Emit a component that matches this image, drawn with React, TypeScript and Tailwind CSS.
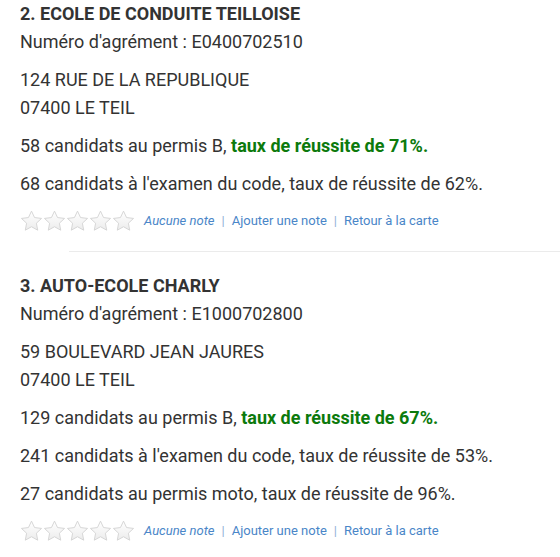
const schools = [
  {
    title: '2. ECOLE DE CONDUITE TEILLOISE',
    agrement: 'E0400702510',
    address: ['124 RUE DE LA REPUBLIQUE', '07400 LE TEIL'],
    permisB: { candidats: 58, taux: 71 },
    stats: ["68 candidats à l'examen du code, taux de réussite de 62%."],
  },
  {
    title: '3. AUTO-ECOLE CHARLY',
    agrement: 'E1000702800',
    address: ['59 BOULEVARD JEAN JAURES', '07400 LE TEIL'],
    permisB: { candidats: 129, taux: 67 },
    stats: [
      "241 candidats à l'examen du code, taux de réussite de 53%.",
      '27 candidats au permis moto, taux de réussite de 96%.',
    ],
  },
];

function Star() {
  return (
    <svg width="23" height="22" viewBox="0 0 24 23">
      <defs>
        <linearGradient id="starFill" x1="0" y1="0" x2="0" y2="1">
          <stop offset="0" stopColor="#ffffff" />
          <stop offset="1" stopColor="#ececec" />
        </linearGradient>
      </defs>
      <path
        d="M12 1.2l3.2 6.7 7.3.9-5.4 5 1.4 7.3L12 17.5l-6.5 3.6 1.4-7.3-5.4-5 7.3-.9z"
        fill="url(#starFill)"
        stroke="#d4d4d4"
        strokeWidth="1"
        strokeLinejoin="round"
      />
    </svg>
  );
}

function Rating() {
  return (
    <div className="mt-[12px] flex h-[22px] items-center text-[13px] text-[#4a86c8]">
      <div className="flex">
        {[0, 1, 2, 3, 4].map((i) => (
          <Star key={i} />
        ))}
      </div>
      <span className="ml-[9px] italic">Aucune note</span>
      <span className="mx-[7px] text-[#8fb0d8]">|</span>
      <span>Ajouter une note</span>
      <span className="mx-[7px] text-[#8fb0d8]">|</span>
      <span>Retour à la carte</span>
    </div>
  );
}

export default function App() {
  return (
    <div className="min-h-[557px] bg-white px-[20px] text-[18px] leading-[28px] text-[#333]" style={{ fontFamily: 'Roboto, "Liberation Sans", sans-serif' }}>
      {schools.map((s, idx) => (
        <div key={s.title}>
          {idx > 0 && <div className="ml-[49px] mr-[-20px] mt-[19px] mb-[20px] border-t border-[#ebebeb]" />}
          <h3 className="font-bold">{s.title}</h3>
          <p>Numéro d'agrément : {s.agrement}</p>
          <p className="mt-[10px]">
            {s.address[0]}
            <br />
            {s.address[1]}
          </p>
          <p className="mt-[10px]">
            {s.permisB.candidats} candidats au permis B,{' '}
            <span className="font-bold text-[#0c7a0c]">taux de réussite de {s.permisB.taux}%.</span>
          </p>
          {s.stats.map((line) => (
            <p key={line} className="mt-[10px]">
              {line}
            </p>
          ))}
          <Rating />
        </div>
      ))}
    </div>
  );
}
